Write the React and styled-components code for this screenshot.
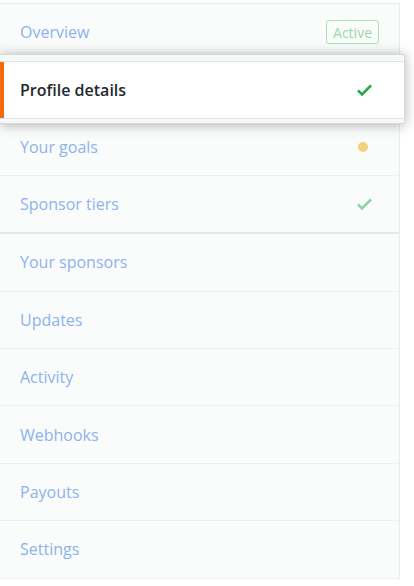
import React from "react";
import styled, { createGlobalStyle } from "styled-components";

const GlobalStyle = createGlobalStyle`
  body {
    margin: 0;
    background: #ffffff;
    font-family: "Open Sans", "Noto Sans", sans-serif;
  }
`;

const Nav = styled.nav`
  width: 400px;
  margin-top: 3px;
  background: #fafcfb;
  border-top: 1px solid #e9eceb;
  border-right: 1px solid #e9eceb;
  box-sizing: border-box;
`;

const Item = styled.a`
  display: flex;
  align-items: center;
  justify-content: space-between;
  height: ${(p) => (p.$group ? "58.4px" : "57.4px")};
  box-sizing: border-box;
  padding: 0 20px;
  border-bottom: ${(p) => (p.$group ? "2px solid #e6e8e7" : "1px solid #eef0ef")};
  color: #8db2ee;
  font-size: 16px;
  text-decoration: none;
`;

const Card = styled.div`
  position: relative;
  z-index: 1;
  margin: -7px -6px -6px 0;
  padding: 6px 0 4px;
  background: #f6f8fa;
  border: 1px solid #d6d9dc;
  border-left: none;
  box-shadow: 0 1px 12px rgba(0, 0, 0, 0.3);
`;

const CardRow = styled.a`
  display: flex;
  align-items: center;
  justify-content: space-between;
  height: 58px;
  box-sizing: border-box;
  padding: 0 25px 0 20px;
  background: #ffffff;
  border-top: 1px solid #e1e4e8;
  border-bottom: 1px solid #e1e4e8;
  box-shadow: inset 4px 0 0 #f66a0a;
  color: #24292e;
  font-size: 16px;
  font-weight: 600;
  text-decoration: none;
`;

const Badge = styled.span`
  display: inline-flex;
  align-items: center;
  height: 24px;
  padding: 0 6px;
  box-sizing: border-box;
  border: 1px solid #a5e4b3;
  border-radius: 3px;
  color: #9bd6a8;
  font-size: 14px;
`;

const Dot = styled.span`
  width: 10px;
  height: 10px;
  border-radius: 50%;
  background: #f1d27d;
  margin-right: 11px;
`;

const CheckIcon = styled.svg`
  width: 15px;
  height: 20px;
  margin-right: 7px;
`;

const Check = ({ color }) => (
  <CheckIcon viewBox="0 0 12 16">
    <path fill={color} d="M12 5l-8 8-4-4 1.5-1.5L4 10l6.5-6.5L12 5z" />
  </CheckIcon>
);

const rest = ["Your sponsors", "Updates", "Activity", "Webhooks", "Payouts", "Settings"];

export default function App() {
  return (
    <>
      <GlobalStyle />
      <Nav>
        <Item>
          Overview
          <Badge>Active</Badge>
        </Item>
        <Card>
          <CardRow>
            Profile details
            <Check color="#28a745" />
          </CardRow>
        </Card>
        <Item>
          Your goals
          <Dot />
        </Item>
        <Item $group>
          Sponsor tiers
          <Check color="#8fd3a0" />
        </Item>
        {rest.map((t) => (
          <Item key={t}>{t}</Item>
        ))}
      </Nav>
    </>
  );
}
